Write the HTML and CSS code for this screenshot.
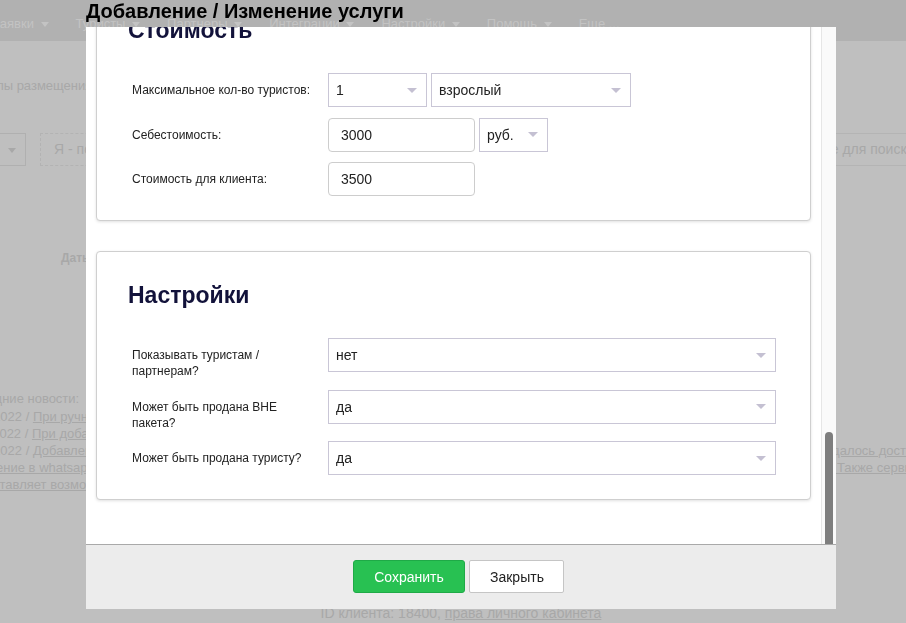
FILE: index.html
```html
<!DOCTYPE html>
<html>
<head>
	<meta charset="utf-8">
	<title>Добавление / Изменение услуги</title>

	<link rel="stylesheet" href="styles.css">

</head>
<body>

	<div class="page">
		<div class="nav">
			<span class="nav-item">Заявки <i class="caret"></i></span>
			<span class="nav-item">Туристы <i class="caret"></i></span>
			<span class="nav-item">Партнеры <i class="caret"></i></span>
			<span class="nav-item">Интеграции <i class="caret"></i></span>
			<span class="nav-item">Настройки <i class="caret"></i></span>
			<span class="nav-item">Помощь <i class="caret"></i></span>
			<span class="nav-item">Еще ...</span>
		</div>

		<div class="tabs">Типы размещения</div>

		<div class="filters">
			<div class="fbox"><i class="caret"></i></div>
			<div class="fdash">Я - покупатель</div>
			<div class="fsearch">Поле для поиска</div>
		</div>

		<div class="dates">Даты</div>

		<div class="news">
			<div class="news-title">Последние новости:</div>
			<div class="news-line"><span class="news-left">15.03.2022 / <u>При ручном добавлении услуги</u></span></div>
			<div class="news-line"><span class="news-left">11.03.2022 / <u>При добавлении туриста</u></span></div>
			<div class="news-line"><span class="news-left">04.03.2022 / <u>Добавлено уведомление</u></span><u class="news-right">не удалось доставить</u></div>
			<div class="news-line"><span class="news-left"><u>сообщение в whatsapp</u></span><u class="news-right">ние. Также сервис</u></div>
			<div class="news-line"><span class="news-left"><u>предоставляет возможность</u></span></div>
		</div>

		<div class="page-foot">ID клиента: 18400, <u>права личного кабинета</u></div>
	</div>

	<div class="modal">
		<div class="modal-head">Добавление / Изменение услуги</div>

		<div class="modal-body">
			<div class="modal-scroll">

				<div class="card">
					<h2>Стоимость</h2>

					<div class="row">
						<div class="label">Максимальное кол-во туристов:</div>
						<div class="select sel-small"><span>1</span><i class="arrow"></i></div>
						<div class="select sel-mid"><span>взрослый</span><i class="arrow"></i></div>
					</div>
					<div class="row">
						<div class="label">Себестоимость:</div>
						<div class="input">3000</div>
						<div class="select sel-cur"><span>руб.</span><i class="arrow"></i></div>
					</div>
					<div class="row">
						<div class="label">Стоимость для клиента:</div>
						<div class="input">3500</div>
					</div>
				</div>

				<div class="card">
					<h2>Настройки</h2>

					<div class="row">
						<div class="label">Показывать туристам /<br>партнерам?</div>
						<div class="select sel-wide"><span>нет</span><i class="arrow"></i></div>
					</div>
					<div class="row">
						<div class="label">Может быть продана ВНЕ<br>пакета?</div>
						<div class="select sel-wide"><span>да</span><i class="arrow"></i></div>
					</div>
					<div class="row">
						<div class="label">Может быть продана туристу?</div>
						<div class="select sel-wide"><span>да</span><i class="arrow"></i></div>
					</div>
				</div>

			</div>
			<div class="scrollbar"><div class="thumb"></div></div>
		</div>

		<div class="modal-foot">
			<button class="btn btn-save">Сохранить</button>
			<button class="btn btn-close">Закрыть</button>
		</div>
	</div>

</body>
</html>
```

FILE: styles.css
```css
	body{
		margin: 0;
		font-family: "Liberation Sans", Arial, sans-serif;
		background: #bfbfbf;
		overflow: hidden;
	}

	/* page behind the dialog (dimmed) */
	.page{
		height: 623px;
		display: flex;
		flex-direction: column;
		color: #a8a8a8;
		font-size: 13px;
		white-space: nowrap;
		overflow: hidden;
	}

	.nav{
		height: 41px;
		flex-shrink: 0;
		background: #b1b1b1;
		display: flex;
		gap: 27px;
		padding-top: 16px;
		box-sizing: border-box;
		margin-left: -8px;
		line-height: 16px;
		color: #c3c3c3;
	}

	.caret{
		display: inline-block;
		vertical-align: middle;
		margin-left: 3px;
		border-left: 4px solid transparent;
		border-right: 4px solid transparent;
		border-top: 5px solid currentColor;
	}

	.tabs{
		margin-top: 37px;
		margin-left: -18px;
		line-height: 16px;
	}

	.filters{
		margin-top: 39px;
		height: 33px;
		display: flex;
		font-size: 14px;
		line-height: 31px;
	}

	.fbox{
		width: 23px;
		margin-left: -8px;
		border: 1px solid #b0b0b0;
		text-align: right;
		padding-right: 9px;
	}

	.fdash{
		margin-left: 14px;
		width: 150px;
		padding-left: 13px;
		border: 1px dashed #b3b3b3;
	}

	.fsearch{
		margin-left: auto;
		margin-right: -80px;
		width: 180px;
		padding-left: 12px;
		border: 1px solid #b4b4b4;
	}

	.dates{
		margin-top: 84px;
		margin-left: 61px;
		font-size: 12px;
		font-weight: bold;
		line-height: 16px;
	}

	.news{
		margin-top: 124px;
		margin-left: -43px;
		line-height: 17px;
	}

	.news-title{
		margin-bottom: 1px;
	}

	.news-line{
		display: flex;
	}

	.news-left{
		width: 851px;
		flex-shrink: 0;
	}

	.page-foot{
		margin-top: auto;
		text-align: center;
		font-size: 14px;
		line-height: 17px;
		padding-bottom: 1px;
		padding-left: 16px;
	}

	/* dialog */
	.modal{
		position: fixed;
		left: 86px;
		top: 0;
		width: 750px;
	}

	.modal-head{
		height: 27px;
		box-sizing: border-box;
		font-size: 20px;
		font-weight: bold;
		line-height: 22px;
		color: #000;
	}

	.modal-body{
		height: 517px;
		background: #fff;
		display: flex;
	}

	.modal-scroll{
		flex: 1;
		display: flex;
		flex-direction: column;
		justify-content: flex-end;
		overflow: hidden;
		padding: 0 10px 44px;
	}

	.scrollbar{
		width: 14px;
		background: #fafafa;
		border-left: 1px solid #e6e6e6;
		display: flex;
		flex-direction: column;
		justify-content: flex-end;
	}

	.thumb{
		width: 8px;
		height: 112px;
		margin-left: 3px;
		background: #7e7e7e;
		border-radius: 4px 4px 0 0;
	}

	.card{
		flex-shrink: 0;
		background: #fff;
		border: 1px solid #cfcfcf;
		border-radius: 4px;
		box-shadow: 0 1px 3px rgba(0,0,0,.12);
		padding: 30px 31px 24px;
	}

	.card + .card{
		margin-top: 30px;
	}

	.card h2{
		margin: 0 0 30px;
		font-size: 23px;
		line-height: 26px;
		color: #12123a;
	}

	.row{
		display: flex;
		align-items: flex-start;
		padding-left: 4px;
		gap: 4px;
	}

	.row + .row{
		margin-top: 10.5px;
	}

	.label{
		width: 192px;
		flex-shrink: 0;
		padding-top: 9px;
		font-size: 12px;
		line-height: 16px;
		color: #222;
	}

	.select, .input{
		height: 34px;
		box-sizing: border-box;
		font-size: 14px;
		color: #222;
		background: #fff;
	}

	.select{
		display: flex;
		align-items: center;
		justify-content: space-between;
		border: 1px solid #c9c6d6;
		padding: 0 9px 0 7px;
	}

	.arrow{
		border-left: 5.5px solid transparent;
		border-right: 5.5px solid transparent;
		border-top: 5.5px solid #c4c0d2;
	}

	.sel-small{ width: 99px; }
	.sel-mid{ width: 200px; }
	.sel-cur{ width: 69px; }
	.sel-wide{ width: 448px; }

	.input{
		width: 147px;
		border: 1px solid #cdcdcd;
		border-radius: 4px;
		padding-left: 12px;
		line-height: 32px;
	}

	.modal-foot{
		height: 65px;
		box-sizing: border-box;
		background: #ececec;
		border-top: 1px solid #a9a9a9;
		padding: 15px 5px 0 0;
		display: flex;
		justify-content: center;
		align-items: flex-start;
		gap: 4px;
	}

	.btn{
		height: 33px;
		padding: 0 20px;
		font-family: "Liberation Sans", Arial, sans-serif;
		font-size: 14px;
		cursor: pointer;
	}

	.btn-save{
		width: 112px;
		background: #28c152;
		border: 1px solid #1faa47;
		border-radius: 3px;
		color: #fff;
	}

	.btn-close{
		width: 95px;
		background: #fff;
		border: 1px solid #c5c5c5;
		border-radius: 2px;
		color: #222;
	}
```
